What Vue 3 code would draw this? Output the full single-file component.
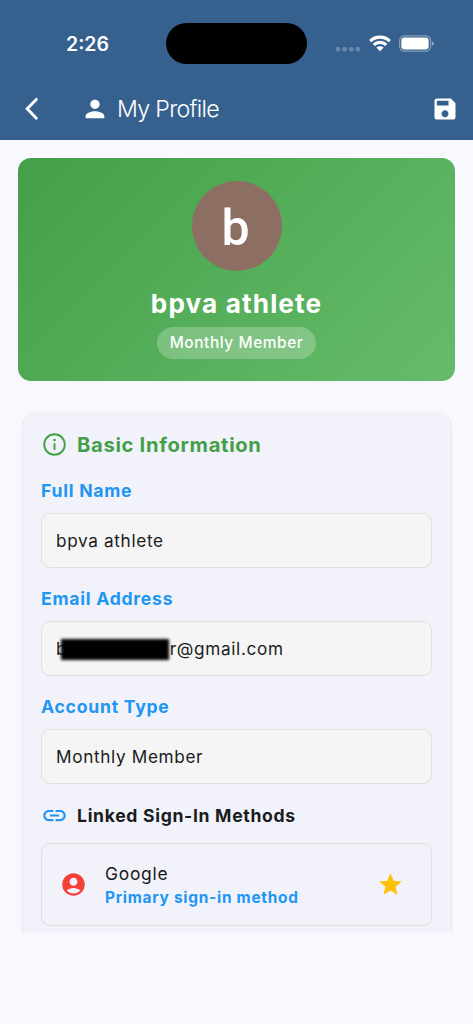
<script setup>
const fields = [
  { label: 'Full Name', value: 'bpva athlete', key: 'name' },
  { label: 'Email Address', prefix: 'b', value: 'r@gmail.com', key: 'email' },
  { label: 'Account Type', value: 'Monthly Member', key: 'type' },
]
</script>

<template>
  <div class="screen">
    <header class="top">
      <div class="status">
        <span class="time">2:26</span>
        <div class="island"></div>
        <div class="indicators">
          <svg class="dots" width="26" height="6" viewBox="0 0 26 6" fill="#fff" fill-opacity=".25">
            <rect x="0.7" y="1" width="4.4" height="4.4" rx="1.6" /><rect x="7.4" y="1" width="4.4" height="4.4" rx="1.6" />
            <rect x="14.1" y="1" width="4.4" height="4.4" rx="1.6" /><rect x="20.8" y="1" width="4.4" height="4.4" rx="1.6" />
          </svg>
          <svg class="wifi" width="22" height="17" viewBox="0 0 22 17">
            <g fill="none" stroke="#fff" stroke-width="3.1">
              <path d="M1.2 6.1a14 14 0 0 1 19.6 0" />
              <path d="M4.8 9.9a8.9 8.9 0 0 1 12.4 0" />
            </g>
            <path d="M7.3 12.6a5.5 5.5 0 0 1 7.4 0L11 16.3z" fill="#fff" />
          </svg>
          <svg class="battery" width="36" height="17" viewBox="0 0 36 17">
            <rect x=".6" y=".8" width="31" height="15.4" rx="5" fill="none" stroke="#fff" stroke-opacity=".4" stroke-width="1.2" />
            <rect x="2.3" y="2.6" width="27.4" height="11.8" rx="3.4" fill="#fff" />
            <path d="M33 6.2q1.8.7 1.8 2.3T33 10.8z" fill="#fff" fill-opacity=".5" />
          </svg>
        </div>
      </div>
      <nav class="bar">
        <svg class="back" width="16" height="24" viewBox="0 0 16 24"><path d="M12.300 2.400 3.200 11.800l9.100 9.400" fill="none" stroke="#fff" stroke-width="2.900" stroke-linecap="round" /></svg>
        <svg class="person" width="28" height="28" viewBox="0 0 24 24" fill="#fff"><path d="M12 12c2.21 0 4-1.79 4-4s-1.790-4-4-4-4 1.790-4 4 1.790 4 4 4zm0 2c-2.670 0-8 1.340-8 4v2h16v-2c0-2.660-5.330-4-8-4z" /></svg>
        <h1>My Profile</h1>
        <svg class="save" width="28" height="28" viewBox="0 0 24 24" fill="#fff"><path d="M17 3H5c-1.110 0-2 .9-2 2v14c0 1.100.89 2 2 2h14c1.100 0 2-.9 2-2V7l-4-4zm-5 16c-1.660 0-3-1.340-3-3s1.340-3 3-3 3 1.340 3 3-1.340 3-3 3zm3-10H5V5h10v4z" /></svg>
      </nav>
    </header>

    <main>
      <section class="hero">
        <div class="avatar"><span>b</span></div>
        <h2>bpva athlete</h2>
        <div class="chip"><span>Monthly Member</span></div>
      </section>

      <div class="viewport">
        <section class="card">
          <div class="heading basic">
            <svg width="27" height="27" viewBox="0 0 24 24" fill="#43a047"><circle cx="12" cy="12" r="9.150" fill="none" stroke="#43a047" stroke-width="1.700" /><rect x="11.150" y="10.800" width="1.700" height="6" rx=".4" /><circle cx="12" cy="8" r="1.150" /></svg>
            <h3>Basic Information</h3>
          </div>
          <div v-for="f in fields" :key="f.key" class="field">
            <div class="label">{{ f.label }}</div>
            <div class="input">
              <template v-if="f.prefix">
                <span>{{ f.prefix }}</span><i class="redaction"></i>
              </template>
              <span>{{ f.value }}</span>
            </div>
          </div>
          <div class="heading linked">
            <svg width="27" height="27" viewBox="0 0 24 24" fill="#2196f3"><path d="M3.900 12c0-1.710 1.390-3.100 3.100-3.100h4V7H7c-2.760 0-5 2.240-5 5s2.240 5 5 5h4v-1.900H7c-1.710 0-3.100-1.390-3.100-3.100zM8 12.800h8v-1.600H8v1.600zm9-5.800h-4v1.900h4c1.710 0 3.100 1.390 3.100 3.100s-1.390 3.100-3.100 3.100h-4V17h4c2.760 0 5-2.240 5-5s-2.240-5-5-5z" /></svg>
            <h4>Linked Sign-In Methods</h4>
          </div>
          <div class="method">
            <svg class="account" width="27" height="27" viewBox="0 0 24 24" fill="#f44336"><path d="M12 2C6.480 2 2 6.480 2 12s4.480 10 10 10 10-4.480 10-10S17.520 2 12 2zm0 4c1.930 0 3.500 1.570 3.500 3.500S13.930 13 12 13s-3.500-1.570-3.500-3.500S10.070 6 12 6zm0 14c-2.030 0-4.430-.82-6.140-2.880C7.550 15.800 9.680 15 12 15s4.450.8 6.140 2.120C16.430 19.180 14.030 20 12 20z" /></svg>
            <div class="who"><span class="provider">Google</span><span class="primary">Primary sign-in method</span></div>
            <svg class="star" width="27" height="27" viewBox="0 0 24 24" fill="#ffc107"><path d="M12 17.270 18.180 21l-1.640-7.030L22 9.240l-7.190-.61L12 2 9.190 8.630 2 9.240l5.460 4.730L5.820 21z" /></svg>
          </div>
        </section>
      </div>
    </main>
  </div>
</template>

<style>
body { margin: 0; background: #f8f9ff; }
</style>

<style scoped>
* { box-sizing: border-box; }
.screen { width: 473px; height: 1024px; overflow: hidden; background: #f8f9ff; color: #191c20; font-family: Inter, "Liberation Sans", sans-serif; white-space: nowrap; }
h1, h2, h3, h4 { margin: 0; }
svg { display: block; flex: none; }
.top { height: 140px; background: #36618e; color: #fff; }
.status { height: 78px; padding-top: 23px; display: flex; }
.time { width: 100px; margin-left: 66px; font-size: 19.5px; line-height: 42px; font-weight: 600; }
.island { width: 141px; height: 41px; border-radius: 21px; background: #000; }
.indicators { display: flex; padding-left: 28px; }
.dots { margin-top: 22.5px; }
.wifi { margin: 11.5px 0 0 7.5px; }
.battery { margin: 12px 0 0 8.500px; }
.bar { height: 61px; display: flex; align-items: center; padding: 0 14px 0 24px; }
.person { margin-left: 41px; }
h1 { margin-left: 8px; font-size: 23.2px; font-weight: 350; line-height: 30px; letter-spacing: -.7px; padding-top: 1px; }
.save { margin-left: auto; }
.hero { height: 223px; margin: 18px 18px 0; padding-top: 22.5px; border-radius: 13px; background: linear-gradient(135deg, #43a047, #66bb6a); color: #fff; display: flex; flex-direction: column; align-items: center; }
.avatar { width: 90px; height: 90px; border-radius: 50%; background: #8d6e63; display: flex; justify-content: center; }
.avatar span { margin-left: -2px; font: 500 50px/94px Roboto, sans-serif; }
h2 { margin-top: 15px; font-size: 26.2px; line-height: 36px; font-weight: 700; letter-spacing: 1.1px; }
.chip { width: 159px; height: 32px; margin-top: 5.5px; border-radius: 16px; background: rgba(255,255,255,.24); text-align: center; font-size: 15.4px; line-height: 32px; font-weight: 450; letter-spacing: .6px; }
.viewport { height: 526px; margin-top: 26px; padding: 5px 22.500px 0 23px; overflow: hidden; }
.card { height: 560px; padding: 19px 18.500px 0 18px; border-radius: 14px; background: #f2f2fa; box-shadow: 0 1px 2px rgba(0,0,0,.24); }
.heading { display: flex; align-items: center; height: 27px; }
.heading h3, .heading h4 { margin-left: 9px; }
h3 { color: #43a047; font-size: 20.2px; font-weight: 650; letter-spacing: .68px; }
h4 { font-size: 17.6px; font-weight: 680; letter-spacing: .68px; }
.field { height: 108px; padding-top: 18px; }
.label { height: 37px; color: #2196f3; font-size: 17.6px; line-height: 29px; font-weight: 650; letter-spacing: .75px; }
.input { height: 55px; padding-left: 14px; border: 1px solid #e0e0e0; border-radius: 9px; background: #f5f5f5; display: flex; align-items: center; font-size: 17.2px; letter-spacing: .65px; }
.redaction { position: relative; width: 108.5px; height: 20.5px; margin: 2px .5px 0 -6.5px; background: #000; filter: blur(1.6px); }
.linked { margin-top: 20px; }
.method { margin-top: 14px; height: 83px; border: 1px solid #e0e0e0; border-radius: 9px; display: flex; align-items: center; padding: 0 27px 0 18px; }
.who { margin-left: 18px; display: flex; flex-direction: column; }
.provider { font-size: 17.4px; line-height: 26px; letter-spacing: .75px; }
.primary { color: #2196f3; font-size: 15.4px; line-height: 22px; font-weight: 650; letter-spacing: .75px; }
.star { margin-left: auto; }
</style>
